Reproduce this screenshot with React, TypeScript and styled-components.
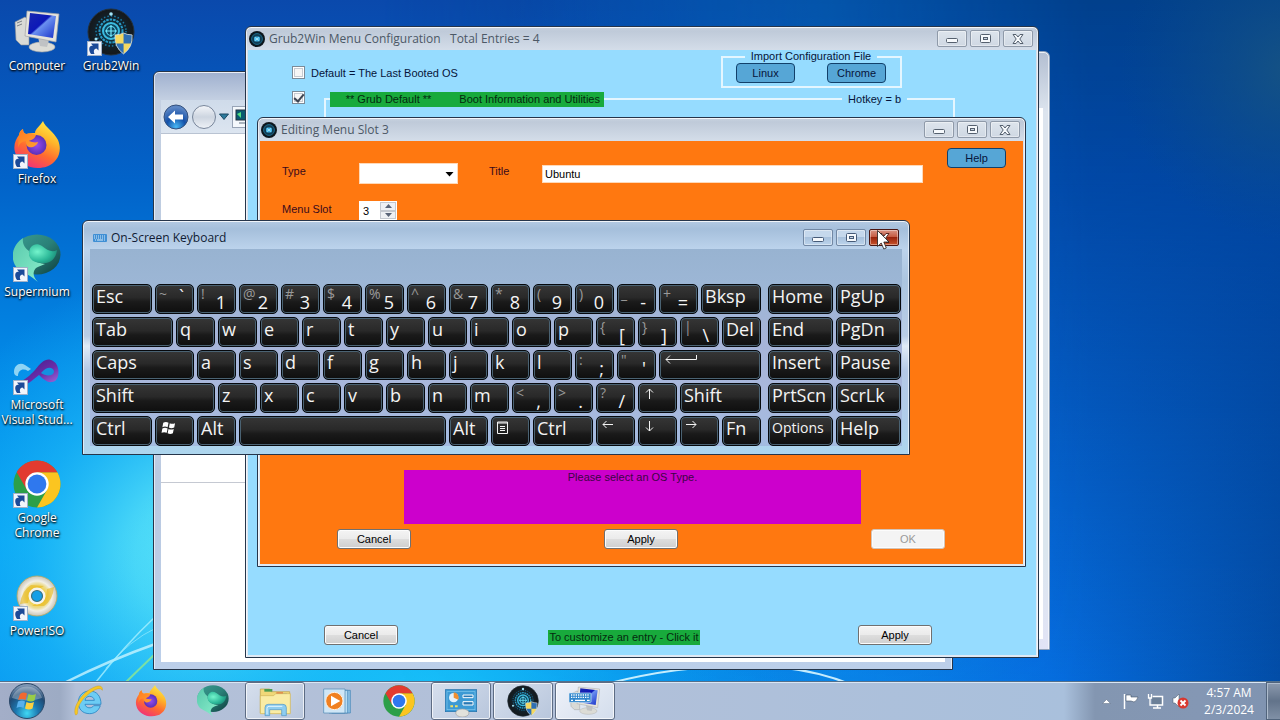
import React from 'react';
import styled, { createGlobalStyle, css } from 'styled-components';

const ui = '"Open Sans", "Noto Sans", sans-serif';
const classic = '"Liberation Sans", Arial, sans-serif';

const Global = createGlobalStyle`
  * { box-sizing: border-box; }
  body { margin: 0; font-family: ${ui}; font-size: 12px; overflow: hidden; }
  button, input, select { font: inherit; color: inherit; margin: 0; padding: 0; }
`;

/* ---------- desktop ---------- */

const Screen = styled.div`
  display: flex;
  flex-direction: column;
  height: 100vh;
  min-height: 480px;
  position: relative;
  overflow: hidden;
  background: #0a6ad8;
`;

const Wallpaper = styled.svg`
  position: absolute;
  inset: 0;
  width: 100%;
  height: 100%;
`;

const Desktop = styled.main`
  flex: 1;
  min-height: 0;
  position: relative;
`;

const IconGrid = styled.nav`
  display: grid;
  grid-auto-flow: column;
  grid-template-rows: repeat(6, 113px);
  grid-auto-columns: 74px;
  justify-content: start;
`;

const Shortcut = styled.a`
  display: flex;
  flex-direction: column;
  align-items: center;
  padding-top: 8px;
  color: #fff;
  font-size: 12px;
  line-height: 15px;
  text-align: center;
  text-decoration: none;
  text-shadow: 0 1px 2px #000, 1px 1px 2px rgba(0, 0, 0, 0.8);
  white-space: pre-line;
  svg { display: block; width: 48px; height: 48px; margin-bottom: 2px; }
`;

/* ---------- windows ---------- */

type Box = { $x: number; $y: number; $w: number; $h: number };

const Window = styled.section<Box & { $glass?: boolean }>`
  position: absolute;
  left: ${p => p.$x}px;
  top: ${p => p.$y}px;
  width: ${p => p.$w}px;
  height: ${p => p.$h}px;
  display: flex;
  flex-direction: column;
  border: 1px solid #26354a;
  border-radius: 6px 6px 0 0;
  overflow: hidden;
  padding: ${p => (p.$glass ? '0 7px 8px' : '0 2px 2px')};
  background: ${p =>
    p.$glass
      ? 'linear-gradient(180deg, #b3c9e2 0, #a5bfdb 8px, #bcd3ec 28px, #abc5e0 60px, #b9cde6 115px, #e0ebf7 125px, #b4c8e6 150px, #b0cdea 85%, #add6ee 100%)'
      : 'linear-gradient(180deg, #c9d3e0 0, #bfcad9 4px, #d5deea 24px, #dfe9f4 100%)'};
  box-shadow: inset 0 1px 0 rgba(255, 255, 255, 0.8), inset 1px 0 0 rgba(255, 255, 255, 0.6),
    inset -1px 0 0 rgba(255, 255, 255, 0.6);
`;

const TitleBar = styled.header<{ $tall?: boolean }>`
  display: flex;
  align-items: center;
  flex: none;
  height: ${p => (p.$tall ? 28 : 23)}px;
  padding: ${p => (p.$tall ? '5px 3px 0 3px' : '0 3px 0 1px')};
  color: ${p => (p.$tall ? '#101c34' : '#4c5866')};
  svg { flex: none; }
`;

const Title = styled.h1`
  flex: 1;
  margin: 0 0 0 4px;
  font-size: 12px;
  line-height: 16px;
  font-weight: 400;
  white-space: pre;
`;

const Controls = styled.div`
  display: flex;
  gap: 3px;
`;

const ControlButton = styled.button<{ $kind?: 'glass' | 'close' }>`
  display: grid;
  place-items: center;
  width: 30px;
  height: 17px;
  border: 1px solid #8f9aa9;
  border-radius: 2px;
  background: linear-gradient(#dde4ec, #cfd8e3);
  box-shadow: inset 0 0 0 1px rgba(255, 255, 255, 0.4);
  ${p => p.$kind === 'glass' && css`
    border-color: #7288a4;
    background: linear-gradient(#c5d8ec 45%, #a8c1dc 50%, #bcd4ec);
  `}
  ${p => p.$kind === 'close' && css`
    border-color: #4b1612;
    background: linear-gradient(#d99484 0, #c65b42 45%, #98230c 50%, #c8532c);
  `}
`;

const Spread = styled.div<{ $pad: string }>`
  display: flex;
  justify-content: space-between;
  align-items: flex-end;
  padding: ${p => p.$pad};
`;

const PushButton = styled.button`
  width: 74px;
  height: 20px;
  border: 1px solid #707070;
  border-radius: 3px;
  background: linear-gradient(#f4f4f4, #ebebeb 48%, #dddddd 52%, #cfcfcf);
  box-shadow: inset 0 0 0 1px #fcfcfc;
  color: #000;
  line-height: 16px;
  &:disabled { border-color: #d3c4b8; background: #f4f4f4; color: #9a9a9a; }
`;

const BlueButton = styled.button`
  width: 59px;
  height: 20px;
  border: 1px solid #12406a;
  border-radius: 4px;
  background: #56a6d6;
  color: #06143a;
  line-height: 16px;
`;

/* ---------- menu configuration window ---------- */

const ConfigBody = styled.div`
  flex: 1;
  display: flex;
  flex-direction: column;
  background: #96dcff;
  color: #06143a;
  font-family: ${classic};
  font-size: 11px;
`;

const ConfigTop = styled.div`
  display: flex;
  justify-content: space-between;
  padding: 0 134px 0 44px;
  height: 38px;
`;

const CheckLabel = styled.label`
  display: flex;
  align-items: center;
  gap: 6px;
  height: 13px;
  margin-top: 16px;
`;

const CheckBox = styled.input`
  appearance: none;
  flex: none;
  width: 13px;
  height: 13px;
  border: 1px solid #7c8b98;
  background: #f6f6f6;
  box-shadow: inset 0 0 0 1px #fff, inset 0 0 0 2px #c6cbd2;
  display: grid;
  place-items: center;
  &:checked::after {
    content: '';
    width: 4px;
    height: 8px;
    margin-top: -2px;
    border: solid #3d4553;
    border-width: 0 2px 2px 0;
    transform: rotate(40deg);
  }
`;

const ImportBox = styled.fieldset`
  display: flex;
  justify-content: space-between;
  width: 181px;
  height: 38px;
  margin: 0;
  padding: 0 14px 0 13px;
  border: 2px solid #e4f6ff;
  legend { margin: 0 auto; padding: 0 6px; line-height: 13px; }
`;

const EntryRow = styled.div`
  display: flex;
  align-items: flex-start;
  gap: 19px;
  padding: 3px 81px 0 44px;
`;

const EntryBox = styled.div`
  flex: 1;
  height: 60px;
  margin-top: 7px;
  border: 2px solid #e4f6ff;
  border-bottom: 0;
`;

const EntryHead = styled.div`
  display: flex;
  justify-content: space-between;
  margin-top: -8px;
  padding: 0 46px 0 4px;
`;

const GreenTag = styled.span<{ $w: number; $end?: boolean }>`
  display: flex;
  justify-content: ${p => (p.$end ? 'flex-end' : 'center')};
  gap: 28px;
  width: ${p => p.$w}px;
  height: 15px;
  padding-right: ${p => (p.$end ? 4 : 0)}px;
  line-height: 15px;
  background: #18aa3c;
  color: #05290f;
  white-space: pre;
`;

const Hotkey = styled.span`
  padding: 0 6px;
  line-height: 15px;
  background: #96dcff;
`;

const ConfigFooter = styled(Spread)`
  margin-top: auto;
  ${GreenTag} { margin-right: 8px; }
`;

/* ---------- slot editor window ---------- */

const EditBody = styled.div`
  flex: 1;
  display: flex;
  flex-direction: column;
  padding-top: 7px;
  background: #ff7810;
  color: #3a0a1c;
  font-family: ${classic};
  font-size: 11px;
`;

const EditTop = styled.div`
  display: flex;
  align-items: flex-start;
  gap: 24px;
  padding: 0 17px 0 22px;
`;

const Fields = styled.div`
  flex: 1;
  display: grid;
  grid-template-columns: 77px 99px 31px 53px 1fr;
  row-gap: 17px;
  padding-top: 15px;
  label { line-height: 16px; }
`;

const SelectWrap = styled.div`
  grid-column: 2;
  position: relative;
  height: 21px;
  select {
    appearance: none;
    width: 100%;
    height: 100%;
    padding: 0 4px;
    border: 1px solid #ffd9b8;
    background: #fff;
    color: #000;
    border-radius: 0;
  }
  svg { position: absolute; right: 4px; top: 9px; pointer-events: none; }
`;

const TitleLabel = styled.label`
  grid-column: 4;
`;

const TextBox = styled.input`
  height: 18px;
  margin-top: 2px;
  padding: 0 2px;
  border: 1px solid #ffd9b8;
  background: #fff;
  color: #000;
`;

const Spinner = styled.div`
  display: flex;
  width: 38px;
  height: 19px;
  padding: 1px;
  background: #fff;
  input { flex: 1; width: 0; border: 0; padding-left: 3px; font-size: 11px; color: #000; background: #fff; }
`;

const SpinButtons = styled.div`
  display: flex;
  flex-direction: column;
  width: 16px;
  button {
    flex: 1;
    display: grid;
    place-items: center;
    border: 1px solid #c4c8d0;
    background: #eef0f4;
  }
`;

const Message = styled.p`
  height: 54px;
  margin: auto 162px 5px 144px;
  background: #cc00cc;
  color: #3c0444;
  text-align: center;
  line-height: 15px;
`;

/* ---------- on-screen keyboard ---------- */

const BoardBody = styled.div`
  flex: 1;
  display: flex;
  gap: 7px;
  padding: 35px 1px 0 2px;
  background: linear-gradient(#98b3d1 0, #9cb6d5 34px, #a6b4d8 90px, #a9b8dc 140px, #a3bbe0 100%);
`;

const MainKeys = styled.div`
  flex: 1;
  display: grid;
  grid-template-columns: repeat(32, 1fr);
  grid-auto-rows: 30px;
  gap: 3px;
  align-content: start;
`;

const SideKeys = styled.div`
  display: grid;
  grid-template-columns: repeat(2, 65px);
  grid-auto-rows: 30px;
  gap: 3px;
  align-content: start;
`;

const Key = styled.button<{ $span?: number; $small?: boolean }>`
  grid-column: span ${p => p.$span ?? 1};
  min-width: 0;
  display: flex;
  align-items: flex-start;
  justify-content: space-between;
  padding: 0 3px;
  border: 1px solid #05080c;
  border-radius: 5px;
  background: linear-gradient(#363636, #292929 45%, #1a1a1a 60%, #0e0e0e);
  box-shadow: inset 0 0 0 1px #4a6272;
  color: #f4f4f4;
  font-family: ${ui};
  font-size: ${p => (p.$small ? 14 : 18)}px;
  line-height: 22px;
  text-align: left;
  white-space: nowrap;
  svg { margin: 4px 0 0 2px; }
`;

const Shifted = styled.span`
  color: #9a9a9a;
  font-size: 14px;
  line-height: 18px;
`;

const Base = styled.span<{ $high?: boolean }>`
  padding: ${p => (p.$high ? '0' : '6px')} 6px 0 0;
`;

/* ---------- explorer window behind ---------- */

const NavBar = styled.div`
  display: flex;
  align-items: center;
  gap: 3px;
  flex: none;
  height: 34px;
  padding-left: 2px;
  background: linear-gradient(#cfdbea, #dce5f0);
  border-bottom: 1px solid #b9c3d2;
`;

const Pane = styled.div<{ $h?: number }>`
  flex: ${p => (p.$h ? 'none' : '1')};
  ${p => p.$h && `height: ${p.$h}px; border-bottom: 1px solid #c5c9d2;`}
  background: #fff;
`;

const ExplorerWindow = styled(Window)`
  padding: 28px 7px 7px;
  background: linear-gradient(#9fb0cf 0, #c4d0e2 28px, #bccbe0 180px, #dfe6f0 300px, #bac9e0 400px, #bccfea 100%);
`;

const RearWindow = styled(Window)`
  padding: 56px 6px 10px;
  border-color: #8fa2bb;
  background: linear-gradient(#b3bfd2, #dce4ee 60px, #dbe6ee 500px, #e2e4f6);
`;

/* ---------- taskbar ---------- */

const Taskbar = styled.footer`
  position: relative;
  flex: none;
  display: flex;
  height: 39px;
  border-top: 1px solid #53708c;
  box-shadow: inset 0 1px 0 #dbe7f5;
  background: linear-gradient(90deg, #a3aec8 0, #9dabc4 60px, #b3c0d8 76px, #b1c0d9 600px, #a9c0dc 1064px, #8396b1 1095px, #8497b4 1200px, #7f93b0 100%);
`;

const StartButton = styled.button`
  width: 59px;
  padding-right: 5px;
  border: 0;
  background: none;
  display: grid;
  place-items: center;
`;

const TaskButton = styled.button<{ $open?: boolean; $active?: boolean }>`
  width: 60px;
  margin-right: 2px;
  display: grid;
  place-items: center;
  border: 1px solid transparent;
  border-radius: 3px;
  background: none;
  svg { width: 32px; height: 32px; }
  ${p => p.$open && css`
    border-color: #5d6c84;
    background: linear-gradient(135deg, ${p.$active ? '#eef2f9' : '#d6dfed'}, ${p.$active ? '#d3ddec' : '#b8c6dc'});
    box-shadow: inset 0 0 0 1px rgba(255, 255, 255, 0.7);
  `}
`;

const Tray = styled.div`
  margin-left: auto;
  display: flex;
  align-items: center;
  gap: 8px;
`;

const Clock = styled.time`
  width: 60px;
  margin-left: 2px;
  color: #fff;
  font-size: 12px;
  line-height: 17px;
  text-align: center;
  white-space: pre;
`;

const ShowDesktop = styled.button`
  align-self: stretch;
  width: 14px;
  margin-left: -1px;
  border: 1px solid #51647c;
  border-right: 0;
  background: linear-gradient(#8c9aae, #62738a 50%, #8090a6);
  box-shadow: inset 1px 1px 0 #aebccd;
`;

const Cursor = styled.svg`
  position: absolute;
  left: 877px;
  top: 230px;
`;

/* ---------- drawings ---------- */

const Gradients = () => (
  <svg width="0" height="0" style={{ position: 'absolute' }} aria-hidden="true">
    <defs>
      <linearGradient id="wBase" x1="0" y1="0" x2="0" y2="1">
        <stop offset="0" stopColor="#0a49ac" /><stop offset="0.25" stopColor="#0263c9" />
        <stop offset="0.5" stopColor="#0288e6" /><stop offset="0.75" stopColor="#02a0f4" /><stop offset="1" stopColor="#0894f0" />
      </linearGradient>
      <radialGradient id="wCyan" gradientUnits="userSpaceOnUse" cx="210" cy="560" r="300" gradientTransform="translate(0 0)">
        <stop offset="0" stopColor="#6cf0fa" /><stop offset="0.25" stopColor="#50dcf8" stopOpacity="0.95" />
        <stop offset="0.6" stopColor="#20bcf8" stopOpacity="0.6" /><stop offset="1" stopColor="#14b0f6" stopOpacity="0" />
      </radialGradient>
      <radialGradient id="wFloor" gradientUnits="userSpaceOnUse" cx="430" cy="720" r="360">
        <stop offset="0" stopColor="#1cc8fa" stopOpacity="0.9" /><stop offset="1" stopColor="#0ab0f6" stopOpacity="0" />
      </radialGradient>
      <linearGradient id="wRight" x1="0" y1="0" x2="1" y2="0">
        <stop offset="0.4" stopColor="#0468d8" stopOpacity="0" /><stop offset="0.65" stopColor="#0a84ea" stopOpacity="0.8" />
        <stop offset="0.82" stopColor="#0670e4" /><stop offset="1" stopColor="#034ea8" />
      </linearGradient>
      <linearGradient id="wDark" x1="0" y1="1" x2="0" y2="0">
        <stop offset="0" stopColor="#0448a0" stopOpacity="0" /><stop offset="0.75" stopColor="#0144a0" stopOpacity="0.9" />
        <stop offset="1" stopColor="#01408c" />
      </linearGradient>
      <linearGradient id="wFade" x1="0" y1="0" x2="1" y2="0">
        <stop offset="0.3" stopColor="#000" /><stop offset="0.85" stopColor="#fff" />
      </linearGradient>
      <mask id="wMask"><rect width="1280" height="720" fill="url(#wFade)" /></mask>
      <radialGradient id="wTeal" gradientUnits="userSpaceOnUse" cx="1290" cy="70" r="170">
        <stop offset="0" stopColor="#1a5680" stopOpacity="0.8" /><stop offset="1" stopColor="#0c4c88" stopOpacity="0" />
      </radialGradient>
      <linearGradient id="ffFlame" x1="0.8" y1="0" x2="0.3" y2="1">
        <stop offset="0" stopColor="#fff04a" /><stop offset="0.35" stopColor="#ffb52a" />
        <stop offset="0.65" stopColor="#ff6a30" /><stop offset="1" stopColor="#f0307a" />
      </linearGradient>
      <radialGradient id="ffBall"><stop offset="0" stopColor="#9a4cf0" /><stop offset="1" stopColor="#5a30b8" /></radialGradient>
      <linearGradient id="ffHead" x1="0" y1="0" x2="1" y2="1">
        <stop offset="0" stopColor="#ff7a20" /><stop offset="1" stopColor="#ffa030" />
      </linearGradient>
      <linearGradient id="smBody" x1="0" y1="0" x2="1" y2="1">
        <stop offset="0" stopColor="#3a9c90" /><stop offset="0.5" stopColor="#2a8078" /><stop offset="1" stopColor="#0d3c3c" />
      </linearGradient>
      <linearGradient id="smLight" x1="0" y1="0" x2="1" y2="1">
        <stop offset="0" stopColor="#58c8ac" /><stop offset="1" stopColor="#8cf0cc" />
      </linearGradient>
      <radialGradient id="smCore" cx="0.3" cy="0.4" r="0.8"><stop offset="0" stopColor="#74f4cc" /><stop offset="0.6" stopColor="#2cb898" /><stop offset="1" stopColor="#178070" /></radialGradient>
      <linearGradient id="scr" x1="0" y1="0" x2="1" y2="1">
        <stop offset="0" stopColor="#1a28b0" /><stop offset="0.45" stopColor="#0c18b8" />
        <stop offset="0.5" stopColor="#6a90f0" /><stop offset="1" stopColor="#1830c8" />
      </linearGradient>
      <radialGradient id="dark"><stop offset="0" stopColor="#0a4e68" /><stop offset="0.55" stopColor="#12242e" /><stop offset="1" stopColor="#15181b" /></radialGradient>
      <linearGradient id="vs" x1="0" y1="0" x2="1" y2="1">
        <stop offset="0" stopColor="#3a1a80" /><stop offset="0.6" stopColor="#6a2ca8" /><stop offset="1" stopColor="#a070e0" />
      </linearGradient>
      <radialGradient id="disc"><stop offset="0.3" stopColor="#f4c820" /><stop offset="0.6" stopColor="#ecdc90" /><stop offset="0.75" stopColor="#f2efe6" /><stop offset="1" stopColor="#c8c4b8" /></radialGradient>
      <radialGradient id="orb" cx="0.5" cy="0.85" r="0.8">
        <stop offset="0" stopColor="#40d8f4" /><stop offset="0.4" stopColor="#1c78b0" />
        <stop offset="0.75" stopColor="#204a74" /><stop offset="1" stopColor="#7f97b4" />
      </radialGradient>
      <radialGradient id="back" cx="0.5" cy="0.9" r="0.8">
        <stop offset="0" stopColor="#48b8f4" /><stop offset="0.5" stopColor="#1450a8" /><stop offset="1" stopColor="#5c86c4" />
      </radialGradient>
      <linearGradient id="fwd" x1="0" y1="0" x2="0" y2="1"><stop offset="0" stopColor="#f4f6fa" /><stop offset="0.5" stopColor="#cdd5e0" /><stop offset="1" stopColor="#eef2f7" /></linearGradient>
    </defs>
  </svg>
);

const Arrow = () => (
  <g>
    <rect x="0.5" y="33.5" width="14" height="14" fill="#f2f5fb" stroke="#9fb0c8" />
    <path d="M4 46 C1 42 2 37 6 38 L4 35.500 H11.500 V42.500 L9.500 40.500 C6.500 41 6.500 43.500 7.500 46 Z" fill="#1c4a98" />
  </g>
);

const Shield = ({ x, y, s }: { x: number; y: number; s: number }) => (
  <g transform={`translate(${x} ${y}) scale(${s})`}>
    <path d="M0 2 Q5 2 9 0 Q13 2 18 2 Q19 15 9 22 Q-1 15 0 2Z" fill="#f4d860" />
    <path d="M9 0 Q13 2 18 2 Q18 7 17 11 L9 11Z" fill="#2f6fb4" />
    <path d="M1 11 L9 11 L9 22 Q2 17 1 11Z" fill="#2f6fb4" />
    <path d="M0 2 Q5 2 9 0 Q13 2 18 2 Q19 15 9 22 Q-1 15 0 2Z" fill="none" stroke="#d8e4ee" strokeWidth="0.8" />
  </g>
);

const ComputerArt = ({ keyboard }: { keyboard?: boolean }) => (
  <>
    <path d="M2 14 L12 9 L16 12 L16 37 L8 37 L3 32Z" fill="#d9dad6" stroke="#8d9096" strokeWidth="0.6" />
    <path d="M4 15 L9 13 M4 18 L9 16" stroke="#7c8288" />
    <ellipse cx="29" cy="39" rx="13" ry="5" fill="#dcdcd6" stroke="#a8a8a4" strokeWidth="0.6" />
    <path d="M25 29 L36 32 L34 39 L27 38Z" fill="#c0c2c4" />
    <path d="M14 3 L46 6 L43 34 L12 28Z" fill="#e6e4dc" stroke="#a2a4a6" strokeWidth="0.7" />
    <path d="M17 5 L43 8 L40 30 L15 26Z" fill="url(#scr)" />
    {keyboard && (
      <>
        <rect x="0" y="12" width="33" height="14" rx="1" fill="#2f86cc" stroke="#d4eaf8" />
        {[15, 18.5].map(y => <path key={y} d={`M3 ${y} H31`} stroke="#fff" strokeWidth="2" strokeDasharray="2 1.5" />)}
        <path d="M3 23 H6 M9 23 H24 M27 23 H31" stroke="#fff" strokeWidth="2" />
      </>
    )}
  </>
);

const GearArt = ({ shield }: { shield?: boolean }) => (
  <>
    <circle cx="24" cy="24" r="23" fill="url(#dark)" stroke="#23303a" />
    <circle cx="24" cy="23" r="15" fill="none" stroke="#1d7aa4" strokeWidth="1.500" strokeDasharray="1.5 2" />
    <circle cx="24" cy="23" r="11.5" fill="none" stroke="#2a9cc8" strokeWidth="2" strokeDasharray="2.5 1" />
    <circle cx="24" cy="23" r="8" fill="#0f4660" stroke="#3cbce0" strokeWidth="2" />
    <circle cx="24" cy="23" r="4.500" fill="none" stroke="#5adcf8" strokeWidth="1.200" />
    <path d="M24 17 V29 M18 23 H30" stroke="#74ecff" strokeWidth="1.2" />
    <circle cx="24" cy="6" r="1.8" fill="#a4e6f8" /><circle cx="9" cy="31" r="1.5" fill="#a4e6f8" />
    {shield && <Shield x={28} y={25} s={0.95} />}
  </>
);

const SmallGear = () => (
  <svg width="16" height="16" viewBox="0 0 16 16">
    <circle cx="8" cy="8" r="8" fill="#0c161d" />
    <circle cx="8" cy="8" r="5.4" fill="#123c52" stroke="#1d6a8c" />
    <rect x="5" y="5.5" width="6" height="5" rx="1.5" fill="#3fb2e4" />
    <path d="M6 6.5 L10 9.5 M10 6.5 L6 9.5" stroke="#b6f0ff" strokeWidth="0.8" />
  </svg>
);

const FirefoxArt = () => (
  <>
    <path d="M30 0 C32 6 41 11 45 19 C50 31 44 42 34 45.500 C21 50 5 44 2 31 C0 24 3 18 6 14 C6 11 8 9 10 8 C10 11 11 12 13 13 C16 12 19 12 22 12 C22 8 27 5 30 0Z" fill="url(#ffFlame)" />
    <circle cx="23.500" cy="24" r="10" fill="url(#ffBall)" />
    <path d="M6 14 C7 11 8 9 10 8 C10 12 12 13 14 13 C18 12 21 13 23 14 C22 18 18 19 16 20 C19 21 22 22 25 21 C24 25 19 27 16 26 C13 25 13 22 13 20 C9 20 6 23 5 27Z" fill="url(#ffHead)" />
  </>
);

const SupermiumArt = () => (
  <>
    <ellipse cx="24" cy="20.500" rx="23.500" ry="20" fill="url(#smBody)" />
    <path d="M10 4 C-1 11 -4 26 5 35 C12 39 18 42 25 48 C19 42 20 37 23 34 C26 32 30 31 32 30 C22 29 15 24 16 17 C12 14 9 10 10 4Z" fill="url(#smLight)" />
    <path d="M16 20 C16 11 23 8 29 12 C34 16 39 19 44 16 C43 25 37 30 29 29 C21 29 16 25 16 20Z" fill="url(#smCore)" />
  </>
);

const VisualStudioArt = () => (
  <g transform="translate(0 5)">
    <path d="M1 20 C1 13 7 10 12 13 L18 17 L15 19 C10 16 5 18 5 24 C2 24 1 22 1 20Z" fill="#8fd4f4" />
    <path d="M3 28 C9 32 16 24 22 18 C29 9 34 5 40 9 C48 13 47 30 39 30 C34 31 29 26 26 23 L21 27 C14 34 7 34 3 28Z" fill="url(#vs)" />
    <path d="M28 21 C32 24 41 25 41 19 C39 14 33 15 28 21Z" fill="#1490e0" />
  </g>
);

const ChromeArt = () => (
  <>
    <circle cx="24" cy="24" r="23.5" fill="#2c9f48" />
    <path d="M24 12.3 H44.4 A23.5 23.5 0 0 1 24 47.5 L34 30Z" fill="#fbc520" />
    <path d="M3.7 12.2 L14 30 L24 12.3 H44.4 A23.5 23.5 0 0 0 3.7 12.2Z" fill="#e23b30" />
    <circle cx="24" cy="24" r="11.7" fill="#fff" />
    <circle cx="24" cy="24" r="9.4" fill="#2f78ee" />
  </>
);

const PowerIsoArt = () => (
  <>
    <circle cx="24" cy="23" r="20" fill="url(#disc)" stroke="#b8a860" strokeWidth="0.8" />
    <path d="M7 31 Q9 17 18 12 L31 13 L24 17 L17 21 L15 30Z M41 14 Q40 27 31 33 L19 33 L26 29 L33 24 L34 16Z" fill="#e8b818" opacity="0.6" />
    <circle cx="24" cy="23" r="8.500" fill="#f6f4ec" />
    <circle cx="24" cy="23" r="5.5" fill="#149fe6" stroke="#3a7080" strokeWidth="1.2" />
  </>
);

const IeArt = () => (
  <>
    <path d="M25 9 C36 9 42 17 42 29 H18 C19 35 28 36 31 31 H41 C38 40 31 43 25 43 C14 43 8 36 8 26 C8 16 15 9 25 9Z M18 23 H32 C31 15 19 15 18 23Z" fill="#6cccf4" stroke="#2482c0" strokeWidth="1.2" fillRule="evenodd" />
    <path d="M4 45 C-2 36 12 12 30 4 C38 0 45 0 44 8 C42 4 36 5 30 9 C16 17 6 32 7 40 C7 43 6 45 4 45Z" fill="#f6c824" stroke="#c8941a" strokeWidth="0.6" />
  </>
);

const ExplorerArt = () => (
  <>
    <path d="M2 6 H16 L18 10 H46 V42 H2Z" fill="#f0d878" stroke="#c0a040" />
    <path d="M8 6 H20 V10 H8Z" fill="#4c9c50" /><path d="M26 11 H36 V14 H26Z" fill="#e07040" /><path d="M36 13 H42 V16 H36Z" fill="#4080d0" />
    <path d="M2 16 H22 L25 13 H47 V43 H2Z" fill="#faeca4" stroke="#d0b458" />
    <path d="M9 46 V34 Q9 29 14 29 H36 Q41 29 41 34 V46 H34 V37 H16 V46Z" fill="#8ecdf0" stroke="#4d94c4" />
    <path d="M12 44 V35 Q12 32 15 32 H35" fill="none" stroke="#e2f6ff" strokeWidth="1.5" />
  </>
);

const MediaArt = () => (
  <>
    <path d="M16 8 H44 V42 H16Z" fill="#8cc0e4" stroke="#3c80b4" /><path d="M12 8 H40 V42 H12Z" fill="#b8dcf2" stroke="#3c80b4" />
    <path d="M4 6 H36 V42 H4Z" fill="#cfe6f6" stroke="#4a86b4" />
    <circle cx="20" cy="24" r="13" fill="#f08020" stroke="#fff0e0" strokeWidth="1.5" />
    <path d="M15 16 L29 24 L15 32Z" fill="#fff" />
  </>
);

const ControlArt = () => (
  <>
    <rect x="0.5" y="7" width="47" height="33" fill="#3c9ad4" stroke="#1f6ea8" />
    <rect x="3" y="10" width="42" height="27" fill="none" stroke="#80c8ee" />
    <circle cx="13" cy="19" r="7" fill="#e4f2fa" /><path d="M13 19 V11 A8 8 0 0 1 20 22Z" fill="#f09030" />
    <path d="M27 15 H42 V19 H27Z M27 25 H42 V30 H27Z" fill="#2878b4" stroke="#fff" strokeWidth="1.5" />
    <path d="M8 32 H12 M15 32 H19" stroke="#f4e060" strokeWidth="3" />
    <ellipse cx="26" cy="42" rx="10" ry="6" fill="#e2e2dc" stroke="#a0a0a0" />
  </>
);

const Icon = ({ art, link }: { art: React.ReactNode; link?: boolean }) => (
  <svg width="48" height="48" viewBox="0 0 48 48" aria-hidden="true">{art}{link && <Arrow />}</svg>
);

const flag = (
  <>
    <path d="M1 2 Q4 0 7 2 L6 7 Q3 5.500 0 7Z" />
    <path d="M8.500 2.500 Q11 4 14.500 2.500 L13.500 7.500 Q10 9 7.500 7.500Z" />
    <path d="M0 8.500 Q3 7 6 8.500 L5 13.500 Q2 12 -1 13.500Z" />
    <path d="M7 9 Q10 10.500 13 9 L12 14 Q9 15.500 6 14Z" />
  </>
);

const WindowControls = ({ glass }: { glass?: boolean }) => {
  const ink = glass ? '#465b78' : '#55606e';
  return (
    <Controls>
      <ControlButton $kind={glass ? 'glass' : undefined} aria-label="Minimize">
        <svg width="12" height="9"><rect x="0.5" y="4.500" width="11" height="4" rx="1" fill="#f6f9fc" stroke={ink} /></svg>
      </ControlButton>
      <ControlButton $kind={glass ? 'glass' : undefined} aria-label="Maximize">
        <svg width="11" height="9"><rect x="0.5" y="0.500" width="10" height="8" rx="1" fill="#f6f9fc" stroke={ink} /><rect x="3.500" y="3.500" width="4" height="2" fill="#cbd6e2" stroke={ink} /></svg>
      </ControlButton>
      <ControlButton $kind={glass ? 'close' : undefined} aria-label="Close">
        <svg width="12" height="10" viewBox="0 0 12 10">
          <path d="M1 0.500 H4 L6 3 L8 0.500 H11 L7.800 5 L11 9.500 H8 L6 7 L4 9.500 H1 L4.200 5Z" fill="#f6f9fc" stroke={glass ? '#5a2a24' : ink} />
        </svg>
      </ControlButton>
    </Controls>
  );
};

/* ---------- keyboard data ---------- */

type KeyDef = { t?: string; s?: string; n?: number; icon?: React.ReactNode; label?: string; high?: boolean };

const line = (d: string, w = 12) => (
  <svg width={w} height="12" fill="none" stroke="#f4f4f4"><path d={d} /></svg>
);

const letters = (text: string): KeyDef[] => text.split('').map(t => ({ t }));

const mainKeys: KeyDef[] = [
  { t: 'Esc', n: 3 }, { s: '~', t: '`', high: true }, { s: '!', t: '1' }, { s: '@', t: '2' }, { s: '#', t: '3' },
  { s: '$', t: '4' }, { s: '%', t: '5' }, { s: '^', t: '6' }, { s: '&', t: '7' }, { s: '*', t: '8' },
  { s: '(', t: '9' }, { s: ')', t: '0' }, { s: '_', t: '-' }, { s: '+', t: '=' }, { t: 'Bksp', n: 3 },
  { t: 'Tab', n: 4 }, ...letters('qwertyuiop'), { s: '{', t: '[' }, { s: '}', t: ']' }, { s: '|', t: '\\' }, { t: 'Del' },
  { t: 'Caps', n: 5 }, ...letters('asdfghjkl'), { s: ':', t: ';' }, { s: '"', t: "'" },
  { label: 'Enter', n: 5, icon: line('M31.500 0 V4.500 H1 M5 0.500 L1 4.500 L5 8.500', 33) },
  { t: 'Shift', n: 6 }, ...letters('zxcvbnm'), { s: '<', t: ',' }, { s: '>', t: '.' }, { s: '?', t: '/' },
  { label: 'Up', icon: line('M5.500 11 V1 M2 4.500 L5.500 1 L9 4.500') }, { t: 'Shift', n: 4 },
  { t: 'Ctrl', n: 3 },
  { label: 'Windows', icon: <svg width="15" height="14" viewBox="-1 0 16 16" fill="#fff">{flag}</svg> },
  { t: 'Alt' }, { label: 'Space', n: 10 }, { t: 'Alt' },
  { label: 'Menu', icon: <svg width="12" height="14" fill="none" stroke="#f4f4f4"><path d="M0.500 1 H10.500 V12.500 H0.500Z M0 2 H11 M3 5.500 H8 M3 7.500 H8 M3 9.500 H8" /></svg> },
  { t: 'Ctrl', n: 3 },
  { label: 'Left', icon: line('M11 3.500 H1 M4.500 0 L1 3.500 L4.500 7') },
  { label: 'Down', icon: line('M5.500 0 V10 M2 6.500 L5.500 10 L9 6.500') },
  { label: 'Right', icon: line('M0 3.500 H10 M6.500 0 L10 3.500 L6.500 7') },
  { t: 'Fn' },
];

const sideKeys = ['Home', 'PgUp', 'End', 'PgDn', 'Insert', 'Pause', 'PrtScn', 'ScrLk', 'Options', 'Help'];

const shortcuts = [
  { name: 'Computer', art: <ComputerArt />, link: false },
  { name: 'Firefox', art: <FirefoxArt />, link: true },
  { name: 'Supermium', art: <SupermiumArt />, link: true },
  { name: 'Microsoft\nVisual Stud...', art: <VisualStudioArt />, link: true },
  { name: 'Google\nChrome', art: <ChromeArt />, link: true },
  { name: 'PowerISO', art: <PowerIsoArt />, link: true },
  { name: 'Grub2Win', art: <GearArt shield />, link: true },
];

const tasks = [
  { name: 'Internet Explorer', art: <IeArt /> },
  { name: 'Firefox', art: <FirefoxArt /> },
  { name: 'Supermium', art: <SupermiumArt /> },
  { name: 'Windows Explorer', art: <ExplorerArt />, open: true },
  { name: 'Media Player', art: <MediaArt /> },
  { name: 'Google Chrome', art: <ChromeArt /> },
  { name: 'Control Panel', art: <ControlArt />, open: true },
  { name: 'Grub2Win', art: <GearArt shield />, open: true },
  { name: 'On-Screen Keyboard', art: <ComputerArt keyboard />, open: true, active: true },
];

export default function App() {
  return (
    <Screen>
      <Global />
      <Gradients />
      <Wallpaper viewBox="0 0 1280 720" preserveAspectRatio="none" aria-hidden="true">
        <rect width="1280" height="720" fill="url(#wBase)" />
        <rect width="1280" height="720" fill="url(#wCyan)" />
        <rect width="1280" height="720" fill="url(#wRight)" />
        <rect width="1280" height="720" fill="url(#wFloor)" />
        <rect width="1280" height="720" fill="url(#wDark)" mask="url(#wMask)" />
        <rect width="1280" height="720" fill="url(#wTeal)" />
        <g fill="none" strokeLinecap="round">
          <path d="M66 682 Q110 660 158 643" stroke="#c8f4ff" strokeWidth="2.500" opacity="0.8" />
          <path d="M96 682 Q125 645 156 616" stroke="#a8f0ff" strokeWidth="1.500" opacity="0.8" />
          <path d="M106 668 Q130 640 156 628" stroke="#a8f0ff" opacity="0.6" />
          <path d="M126 682 L156 653" stroke="#90e890" strokeWidth="2" opacity="0.8" />
          <path d="M610 683 Q700 660 785 668 Q820 672 850 684" stroke="#d8f6ff" strokeWidth="2" opacity="0.9" />
        </g>
      </Wallpaper>

      <Desktop>
        <IconGrid aria-label="Desktop">
          {shortcuts.map(s => (
            <Shortcut key={s.name} href="#"><Icon art={s.art} link={s.link} />{s.name}</Shortcut>
          ))}
        </IconGrid>

        <RearWindow $x={400} $y={51} $w={650} $h={599}><Pane /></RearWindow>

        <ExplorerWindow $x={153} $y={71} $w={800} $h={599}>
          <NavBar>
            <svg width="26" height="26"><circle cx="13" cy="13" r="12" fill="url(#back)" stroke="#34507c" /><path d="M5 13 L12 6.500 V10.500 H20 V15.500 H12 V19.500Z" fill="#fff" /></svg>
            <svg width="24" height="24"><circle cx="12" cy="12" r="11.500" fill="url(#fwd)" stroke="#77859a" /></svg>
            <svg width="10" height="8"><path d="M0.500 1 H9.500 L5 6.500Z" fill="#2c7a9c" stroke="#1e4a64" /></svg>
            <svg width="24" height="22"><rect x="0.500" y="0.500" width="30" height="21" fill="#f4f8fc" stroke="#98a4b6" /><rect x="4" y="4" width="14" height="10" fill="#0a5a70" stroke="#203040" /><path d="M5 8 L9 12 V6Z" fill="#50e080" /><path d="M7 17 H16" stroke="#607080" /></svg>
          </NavBar>
          <Pane $h={349} />
          <Pane />
        </ExplorerWindow>

        <Window $x={245} $y={26} $w={794} $h={632}>
          <TitleBar><SmallGear /><Title>{'Grub2Win Menu Configuration   Total Entries = 4'}</Title><WindowControls /></TitleBar>
          <ConfigBody>
            <ConfigTop>
              <CheckLabel><CheckBox type="checkbox" />Default = The Last Booted OS</CheckLabel>
              <ImportBox>
                <legend>Import Configuration File</legend>
                <BlueButton>Linux</BlueButton>
                <BlueButton>Chrome</BlueButton>
              </ImportBox>
            </ConfigTop>
            <EntryRow>
              <CheckBox type="checkbox" defaultChecked aria-label="Grub Default" />
              <EntryBox>
                <EntryHead>
                  <GreenTag $w={274} $end><span>** Grub Default **</span><span>Boot Information and Utilities</span></GreenTag>
                  <Hotkey>Hotkey = b</Hotkey>
                </EntryHead>
              </EntryBox>
            </EntryRow>
            <ConfigFooter $pad="0 104px 10px 76px">
              <PushButton>Cancel</PushButton>
              <GreenTag $w={152}>To customize an entry - Click it</GreenTag>
              <PushButton>Apply</PushButton>
            </ConfigFooter>
          </ConfigBody>
        </Window>

        <Window $x={257} $y={117} $w={769} $h={450}>
          <TitleBar><SmallGear /><Title>Editing Menu Slot 3</Title><WindowControls /></TitleBar>
          <EditBody>
            <EditTop>
              <Fields>
                <label htmlFor="type">Type</label>
                <SelectWrap>
                  <select id="type" defaultValue=""><option value="" /></select>
                  <svg width="9" height="5"><path d="M0.500 0 H8.500 L4.500 4.500Z" fill="#000" /></svg>
                </SelectWrap>
                <TitleLabel htmlFor="title">Title</TitleLabel>
                <TextBox id="title" defaultValue="Ubuntu" />
                <label htmlFor="slot">Menu Slot</label>
                <Spinner>
                  <input id="slot" defaultValue="3" />
                  <SpinButtons>
                    <button aria-label="Increase"><svg width="7" height="4"><path d="M0 4 L3.500 0 L7 4Z" fill="#5a6478" /></svg></button>
                    <button aria-label="Decrease"><svg width="7" height="4"><path d="M0 0 L3.500 4 L7 0Z" fill="#5a6478" /></svg></button>
                  </SpinButtons>
                </Spinner>
              </Fields>
              <BlueButton>Help</BlueButton>
            </EditTop>
            <Message>Please select an OS Type.</Message>
            <Spread $pad="0 78px 15px 77px">
              <PushButton>Cancel</PushButton>
              <PushButton>Apply</PushButton>
              <PushButton disabled>OK</PushButton>
            </Spread>
          </EditBody>
        </Window>

        <Window $x={82} $y={220} $w={828} $h={235} $glass>
          <TitleBar $tall>
            <svg width="14" height="8"><rect width="14" height="8" rx="1" fill="#3f8fd4" /><path d="M1 2 H13 M1 4 H13" stroke="#d8ecfb" strokeDasharray="1 1" /><path d="M2 6 H12" stroke="#d8ecfb" strokeDasharray="1 1 6 1" /></svg>
            <Title>On-Screen Keyboard</Title>
            <WindowControls glass />
          </TitleBar>
          <BoardBody>
            <MainKeys>
              {mainKeys.map((k, i) => (
                <Key key={i} $span={k.n ?? 2} aria-label={k.label}>
                  {k.s && <Shifted>{k.s}</Shifted>}
                  {k.s ? <Base $high={k.high}>{k.t}</Base> : k.t}
                  {k.icon}
                </Key>
              ))}
            </MainKeys>
            <SideKeys>
              {sideKeys.map(k => <Key key={k} $small={k === 'Options'}>{k}</Key>)}
            </SideKeys>
          </BoardBody>
        </Window>
      </Desktop>

      <Taskbar>
        <StartButton aria-label="Start">
          <svg width="36" height="36" viewBox="0 0 36 36">
            <circle cx="18" cy="18" r="17.500" fill="url(#orb)" stroke="#2b4868" />
            <path d="M3 15 A15.500 15.500 0 0 1 33 15 Q18 20 3 15Z" fill="#fff" opacity="0.3" />
            <path d="M11 11 Q14.500 8.500 18 10.500 L16.500 17 Q13 15 9 17Z" fill="#f06830" />
            <path d="M19.500 11 Q23 13 27 11 L25.500 17.500 Q22 19.500 18 17.500Z" fill="#98cc48" />
            <path d="M9 18.500 Q13 16.500 16 18.500 L14.500 25 Q11 23 7.500 25Z" fill="#58b0ec" />
            <path d="M17.500 19 Q21 21 25 19 L23.500 25.500 Q20 27.500 16 25.500Z" fill="#fcd040" />
          </svg>
        </StartButton>
        {tasks.map(t => (
          <TaskButton key={t.name} $open={t.open} $active={t.active} aria-label={t.name}><Icon art={t.art} /></TaskButton>
        ))}
        <Tray>
          <svg width="9" height="5"><path d="M0.500 4.500 L4.500 0.500 L8.500 4.500Z" fill="#fff" stroke="#5a6a80" strokeWidth="0.500" /></svg>
          <svg width="20" height="16" viewBox="-4 0 20 16"><path d="M1.500 1 V16" stroke="#fff" strokeWidth="1.500" /><path d="M3 2 H8 V4 H15 Q14 8 11 9 L8 8 H3Z" fill="#fff" stroke="#44546a" strokeWidth="0.600" /></svg>
          <svg width="17" height="16" fill="none"><rect x="5" y="3" width="11" height="9" fill="#6c8098" /><path d="M5.500 3.500 H15.500 V12 H6 M6 15 H14 M10.500 12 V15" stroke="#fff" strokeWidth="1.500" /><path d="M1.500 1 V5 H4.500 V1 M3 5 V12 H6" stroke="#fff" strokeWidth="1.300" /></svg>
          <svg width="17" height="16"><path d="M1 5 H3 L7 1 V14 L3 10 H1Z" fill="#fff" stroke="#44546a" strokeWidth="0.500" /><circle cx="11" cy="10" r="5.500" fill="#d83830" /><path d="M8.500 7.500 L13.500 12.500 M13.500 7.500 L8.500 12.500" stroke="#fff" strokeWidth="1.800" /></svg>
          <Clock>{'4:57 AM\n2/3/2024'}</Clock>
          <ShowDesktop aria-label="Show desktop" />
        </Tray>
      </Taskbar>

      <Cursor width="13" height="20" viewBox="0 0 13 20" aria-hidden="true">
        <path d="M0.500 0.500 V16.500 L4.200 13 L6.800 19 L9.300 18 L6.800 12 H12Z" fill="#fff" stroke="#1c1c1c" strokeWidth="0.800" />
      </Cursor>
    </Screen>
  );
}
